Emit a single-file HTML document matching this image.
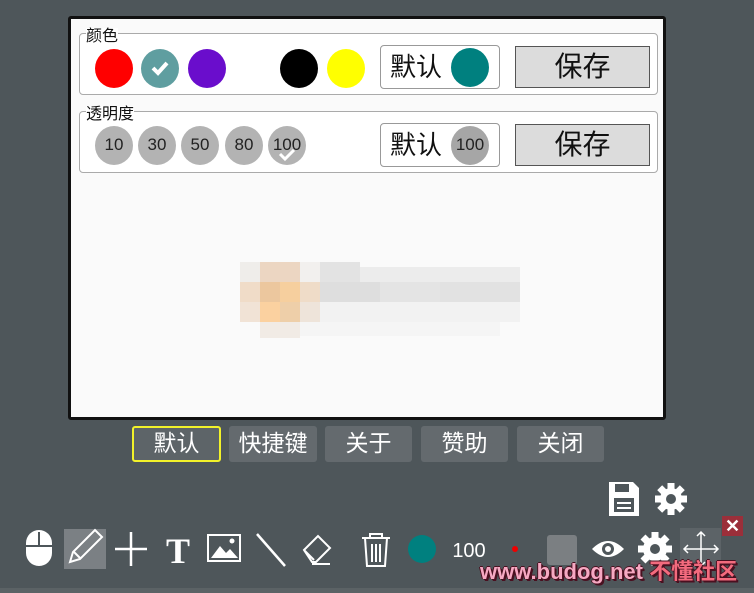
<!DOCTYPE html>
<html><head><meta charset="utf-8">
<style>
*{box-sizing:border-box;margin:0;padding:0}
body{width:754px;height:593px;background:#4e565a;position:relative;overflow:hidden;font-family:"Liberation Sans","Noto Sans CJK SC",sans-serif}
.a{position:absolute}
.panel{left:68px;top:16px;width:598px;height:404px;background:#fafafa;border:3px solid #111;border-radius:3px}
.grp{position:absolute;border:1px solid #aaa;border-radius:4px;background:#fff}
.lbl{position:absolute;font-size:16px;color:#111;background:#fff;line-height:18px}
.c{position:absolute;width:38px;height:39px;border-radius:50%}
.n{position:absolute;width:38px;height:39px;border-radius:50%;background:#b3b3b3;color:#222;font-size:17px;text-align:center;line-height:38px}
.def{position:absolute;width:120px;height:44px;border:1px solid #999;border-radius:4px;background:#fff;font-size:26px;line-height:42px;padding-left:9px;color:#111}
.save{position:absolute;width:135px;height:42px;border:1px solid #555;background:#dcdcdc;font-size:28px;text-align:center;line-height:40px;color:#111}
.tab{position:absolute;top:426px;height:36px;background:#646a6e;border-radius:3px;color:#fff;font-size:23px;text-align:center;line-height:34px}
.m{position:absolute;width:20px;height:20px}
</style></head><body>
<div class="a panel">
  <div class="grp" style="left:8px;top:14px;width:579px;height:62px"></div>
  <div class="lbl" style="left:15px;top:9px">颜色</div>
  <div class="c" style="left:24px;top:30px;background:#f00"></div>
  <div class="c" style="left:70px;top:30px;background:#5f9ea0"><svg width="38" height="38"><path d="M12 19l5 5 9-10" stroke="#fff" stroke-width="4" fill="none"/></svg></div>
  <div class="c" style="left:117px;top:30px;background:#6a0dcc"></div>
  <div class="c" style="left:209px;top:30px;background:#000"></div>
  <div class="c" style="left:256px;top:30px;background:#ff0"></div>
  <div class="def" style="left:309px;top:26px">默认<div class="c" style="left:70px;top:2px;background:#00807f"></div></div>
  <div class="save" style="left:444px;top:27px">保存</div>

  <div class="grp" style="left:8px;top:92px;width:579px;height:62px"></div>
  <div class="lbl" style="left:15px;top:87px">透明度</div>
  <div class="n" style="left:24px;top:107px">10</div>
  <div class="n" style="left:67px;top:107px">30</div>
  <div class="n" style="left:110px;top:107px">50</div>
  <div class="n" style="left:154px;top:107px">80</div>
  <div class="n" style="left:197px;top:107px">100<svg class="a" style="left:8px;top:20px" width="22" height="16"><path d="M4 8l5 5 9-9" stroke="#fff" stroke-width="3" fill="none"/></svg></div>
  <div class="def" style="left:309px;top:104px">默认<div class="n" style="left:70px;top:2px;background:#a6a6a6">100</div></div>
  <div class="save" style="left:444px;top:105px">保存</div>

  <div class="m" style="left:169px;top:243px;background:#efedea"></div>
  <div class="m" style="left:189px;top:243px;width:40px;background:#ecd6c2"></div>
  <div class="m" style="left:229px;top:243px;background:#f2f0ee"></div>
  <div class="m" style="left:249px;top:243px;width:40px;background:#e3e3e3"></div>
  <div class="m" style="left:289px;top:248px;width:160px;height:15px;background:#ececec"></div>
  <div class="m" style="left:169px;top:263px;background:#f0dcc8"></div>
  <div class="m" style="left:189px;top:263px;background:#ecc79e"></div>
  <div class="m" style="left:209px;top:263px;background:#f6cf9e"></div>
  <div class="m" style="left:229px;top:263px;background:#efdcc8"></div>
  <div class="m" style="left:249px;top:263px;width:60px;background:#dedede"></div>
  <div class="m" style="left:309px;top:263px;width:60px;background:#e4e4e4"></div>
  <div class="m" style="left:369px;top:263px;width:80px;background:#e2e2e2"></div>
  <div class="m" style="left:169px;top:283px;background:#f1e3d6"></div>
  <div class="m" style="left:189px;top:283px;background:#fbd1a0"></div>
  <div class="m" style="left:209px;top:283px;background:#eecfa9"></div>
  <div class="m" style="left:229px;top:283px;background:#eee4da"></div>
  <div class="m" style="left:249px;top:283px;width:200px;background:#f2f2f2"></div>
  <div class="m" style="left:189px;top:303px;width:40px;height:16px;background:#f1ebe5"></div>
  <div class="m" style="left:229px;top:303px;width:200px;height:14px;background:#f5f5f5"></div>
</div>

<div class="tab" style="left:132px;width:89px;border:2px solid #f2f22a;background:#5d6468;line-height:31px">默认</div>
<div class="tab" style="left:229px;width:88px">快捷键</div>
<div class="tab" style="left:325px;width:87px">关于</div>
<div class="tab" style="left:421px;width:87px">赞助</div>
<div class="tab" style="left:517px;width:87px">关闭</div>

<svg class="a" style="left:605px;top:480px" width="90" height="40">
 <path d="M4 2h24l6 6v28H4z" fill="#fff"/><rect x="10" y="4" width="14" height="8" fill="#4e565a"/><rect x="9" y="18" width="20" height="14" fill="#4e565a"/><rect x="12" y="22" width="14" height="2" fill="#fff"/><rect x="12" y="27" width="14" height="2" fill="#fff"/>
 <g transform="translate(66,19)" fill="#fff"><circle r="11"/><g id="t"><rect x="-3.5" y="-16" width="7" height="32"/></g><use href="#t" transform="rotate(45)"/><use href="#t" transform="rotate(90)"/><use href="#t" transform="rotate(135)"/><circle r="5" fill="#4e565a"/></g>
</svg>

<div class="a" style="left:64px;top:529px;width:42px;height:40px;background:#7b8084"></div>
<div class="a" style="left:680px;top:528px;width:41px;height:42px;background:#5c6367"></div>
<div class="a" style="left:722px;top:516px;width:21px;height:20px;background:#9b2f3a;color:#fff;font-size:18px;font-weight:bold;text-align:center;line-height:20px">✕</div>
<svg class="a" style="left:0;top:520px" width="754" height="60">
 <rect x="26" y="10" width="26" height="36" rx="13" fill="#fff"/><path d="M26 26h26M39 12v14" stroke="#4e565a" stroke-width="2"/>
 <path d="M70 42l3-10 22-22 7 7-22 22z" stroke="#fff" stroke-width="2" fill="none"/><path d="M74 32l7 7" stroke="#fff" stroke-width="2"/>
 <path d="M131 12v34M115 29h32" stroke="#fff" stroke-width="2.5"/>
 <text x="178" y="43" fill="#fff" font-size="36" font-weight="bold" font-family="Liberation Serif" text-anchor="middle">T</text>
 <rect x="208" y="15" width="32" height="26" fill="none" stroke="#fff" stroke-width="2"/><path d="M211 38l9-12 6 7 4-4 8 9z" fill="#fff"/><circle cx="232" cy="21" r="2.5" fill="#fff"/>
 <path d="M257 14l28 32" stroke="#fff" stroke-width="2.5"/>
 <path d="M304 30l14-14 12 12-14 14h-4zM304 30l10 10M312 44h18" stroke="#fff" stroke-width="2" fill="none"/>
 <path d="M362 18h28M370 18v-4h12v4M365 18l2 28h18l2-28M372 24v18M376 24v18M380 24v18" stroke="#fff" stroke-width="2" fill="none"/>
 <circle cx="422" cy="29" r="14" fill="#00807f"/>
 <text x="469" y="37" fill="#fff" font-size="20" text-anchor="middle">100</text>
 <circle cx="515" cy="29" r="3" fill="#e00"/>
 <rect x="547" y="15" width="30" height="30" rx="3" fill="#7b7f82"/>
 <path d="M592 29q16-16 32 0q-16 16-32 0z" fill="#fff"/><circle cx="608" cy="29" r="6" fill="#4e565a"/><circle cx="608" cy="29" r="3" fill="#fff"/>
 <g transform="translate(655,29)" fill="#fff"><circle r="12"/><rect x="-3.5" y="-17" width="7" height="34"/><rect x="-3.5" y="-17" width="7" height="34" transform="rotate(45)"/><rect x="-3.5" y="-17" width="7" height="34" transform="rotate(90)"/><rect x="-3.5" y="-17" width="7" height="34" transform="rotate(135)"/><circle r="5" fill="#4e565a"/></g>
 <path d="M701 12v34M684 29h34M697 16l4-4 4 4M697 42l4 4 4-4M688 25l-4 4 4 4M714 25l4 4-4 4" stroke="#fff" stroke-width="1.5" fill="none"/>
</svg>
<div class="a" style="left:480px;top:559px;font-size:22px;line-height:26px;font-weight:bold;color:#f6a8c2;text-shadow:1px 1px 0 #4a1020,-1px 0 0 #4a1020,0 -1px 0 #4a1020,2px 2px 0 #4a1020;white-space:nowrap">www.budog.net <span style="color:#f36b7e">不懂社区</span></div>
<div class="a" style="left:0;top:588px;width:754px;height:5px;background:#5b6265"></div>
</body></html>
